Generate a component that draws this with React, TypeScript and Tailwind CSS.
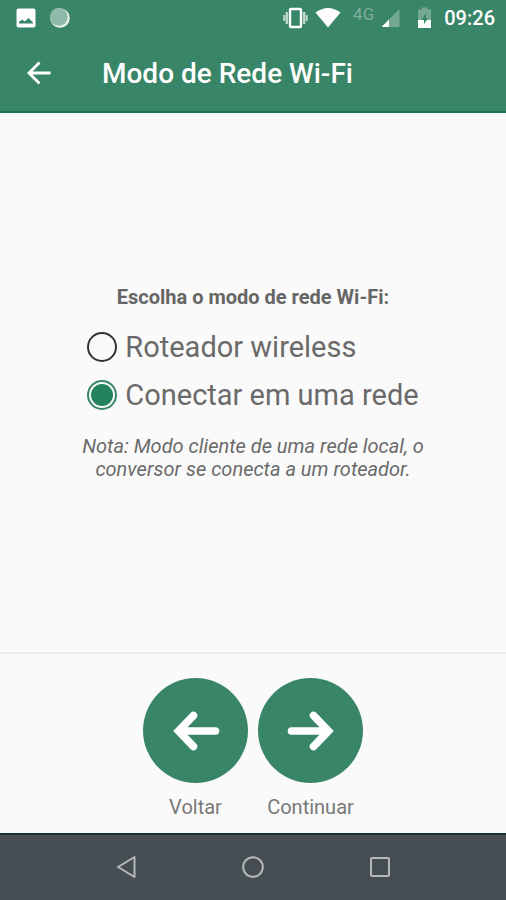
import { useState } from "react"

const modes = [
  { id: "router", label: "Roteador wireless" },
  { id: "client", label: "Conectar em uma rede" },
]

function StatusBar() {
  return (
    <div className="flex h-9 items-center justify-between pl-4 pr-[11px] text-white">
      <div className="flex items-center gap-3">
        <svg className="h-5 w-5" viewBox="0 0 20 20" aria-hidden="true">
          <rect x="0.5" y="0.5" width="19" height="19" rx="2" fill="#fff" />
          <path d="M3 15.500v-1.500l3-2.500 2.800 2 3.800-3.500 4.400 4.500v1z" fill="#388567" />
        </svg>
        <svg className="h-6 w-6" viewBox="0 0 24 24" aria-hidden="true">
          <circle cx="12" cy="12" r="9.8" fill="#e6f1ec" />
          <circle cx="10.8" cy="10.8" r="9" fill="#8fb9a8" />
        </svg>
      </div>
      <div className="flex items-center">
        <svg className="h-6 w-7" viewBox="0 0 28 24" fill="none" aria-hidden="true">
          <rect x="9" y="3" width="11" height="18" rx="1" stroke="#fff" strokeWidth="2.4" />
          <path d="M5.800 6v12M23.200 6v12" stroke="#c7ddd3" strokeWidth="2.2" />
          <path d="M3.300 9v6M25.700 9v6" stroke="#c7ddd3" strokeWidth="2" />
        </svg>
        <svg className="ml-1 h-6 w-7" viewBox="0 0 28 24" aria-hidden="true">
          <path d="M2.500 6.500Q15 -2.500 27.500 6.500L15 21.500z" fill="#fff" />
        </svg>
        <span className="ml-3 pb-2 text-[17px] leading-4 text-[#7fae9b]">4G</span>
        <svg className="ml-1.5 h-5 w-5" viewBox="0 0 20 20" aria-hidden="true">
          <path d="M19.500 1v18H1.500z" fill="#74a892" />
          <path d="M9 11.500v7.500H1.500z" fill="#fff" />
        </svg>
        <svg className="ml-4 h-6 w-4" viewBox="0 0 16 24" aria-hidden="true">
          <path d="M5.500 1.500h6v2h3.500v11h-13v-11h3.500z" fill="#74a892" />
          <path d="M2 14h13v8h-13z" fill="#fff" />
          <path d="M10 7l-4.500 7h2.500v4l4-6H10z" fill="#388567" />
        </svg>
        <span className="ml-3 text-[20px] font-medium leading-6">09:26</span>
      </div>
    </div>
  )
}

function RoundButton({ label, arrow }: { label: string; arrow: string }) {
  return (
    <button type="button" className="flex w-[105px] flex-col items-center gap-3 text-[20px] leading-6 text-[#787878]">
      <span className="flex h-[105px] w-[105px] items-center justify-center rounded-full bg-[#388567]">
        <svg
          className="h-12 w-12"
          viewBox="0 0 48 48"
          fill="none"
          stroke="#fff"
          strokeWidth="7.6"
          strokeLinecap="round"
          strokeLinejoin="miter"
          aria-hidden="true"
        >
          <path d={arrow} />
        </svg>
      </span>
      {label}
    </button>
  )
}

function NavigationBar() {
  return (
    <nav className="flex h-[67px] justify-center gap-[79px] border-t-2 border-[#18332e] bg-[#464e53] pb-[2px] text-[#b4b9bc]">
      <button type="button" aria-label="Voltar" className="flex w-12 items-center justify-center">
        <svg className="h-6 w-6" viewBox="0 0 24 24" fill="none" stroke="currentColor" strokeWidth="2" strokeLinejoin="round">
          <path d="M20.500 2v20L4 12z" />
        </svg>
      </button>
      <button type="button" aria-label="Início" className="flex w-12 items-center justify-center">
        <svg className="h-6 w-6" viewBox="0 0 24 24" fill="none" stroke="currentColor" strokeWidth="2">
          <circle cx="12" cy="12" r="9.8" />
        </svg>
      </button>
      <button type="button" aria-label="Recentes" className="flex w-12 items-center justify-center">
        <svg className="h-6 w-6" viewBox="0 0 24 24" fill="none" stroke="currentColor" strokeWidth="2">
          <rect x="3" y="3" width="18" height="18" rx="1" />
        </svg>
      </button>
    </nav>
  )
}

export default function App() {
  const [mode, setMode] = useState("client")

  return (
    <div className="flex min-h-screen flex-col bg-[#fafafa] font-[Roboto,sans-serif]">
      <header className="border-b-2 border-[#1f7452] bg-[#388567] text-white">
        <StatusBar />
        <div className="flex h-[75px] items-center gap-12 pl-6 pt-px">
          <button type="button" aria-label="Voltar">
            <svg className="h-[30px] w-[30px]" viewBox="0 0 30 30" fill="none" stroke="currentColor" strokeWidth="2.8" aria-hidden="true">
              <path d="M26.500 14H5M15.500 3.500L5 14l10.500 10.500" />
            </svg>
          </button>
          <h1 className="text-[28px] font-medium leading-8">Modo de Rede Wi-Fi</h1>
        </div>
      </header>

      <main className="flex flex-1 flex-col items-center justify-center">
        <fieldset className="flex flex-col items-center">
          <legend className="mx-auto pb-[14px] text-[20px] font-bold leading-6 text-[#666]">
            Escolha o modo de rede Wi-Fi:
          </legend>
          <div className="flex flex-col">
            {modes.map((item) => (
              <label key={item.id} className="flex h-12 items-center gap-2 text-[29px] leading-9 text-[#6a6a6a]">
                <input
                  type="radio"
                  name="mode"
                  value={item.id}
                  checked={mode === item.id}
                  onChange={() => setMode(item.id)}
                  className="h-[30px] w-[30px] appearance-none rounded-full border-2 border-[#333] bg-clip-content p-[2px] checked:border-[#388567] checked:bg-[#24835c]"
                />
                {item.label}
              </label>
            ))}
          </div>
        </fieldset>
        <p className="mt-4 max-w-[350px] text-center text-[20px] italic leading-[23px] text-[#6a6a6a]">
          Nota: Modo cliente de uma rede local, o conversor se conecta a um roteador.
        </p>
      </main>

      <footer className="flex justify-center gap-[10px] border-t-2 border-[#eeeeee] pb-[14px] pt-6">
        <RoundButton label="Voltar" arrow="M43.500 24H9M21.500 8.500L6.500 24L21.500 39.500" />
        <RoundButton label="Continuar" arrow="M4.500 24H39M26.500 8.500L41.500 24L26.500 39.500" />
      </footer>
      <NavigationBar />
    </div>
  )
}
